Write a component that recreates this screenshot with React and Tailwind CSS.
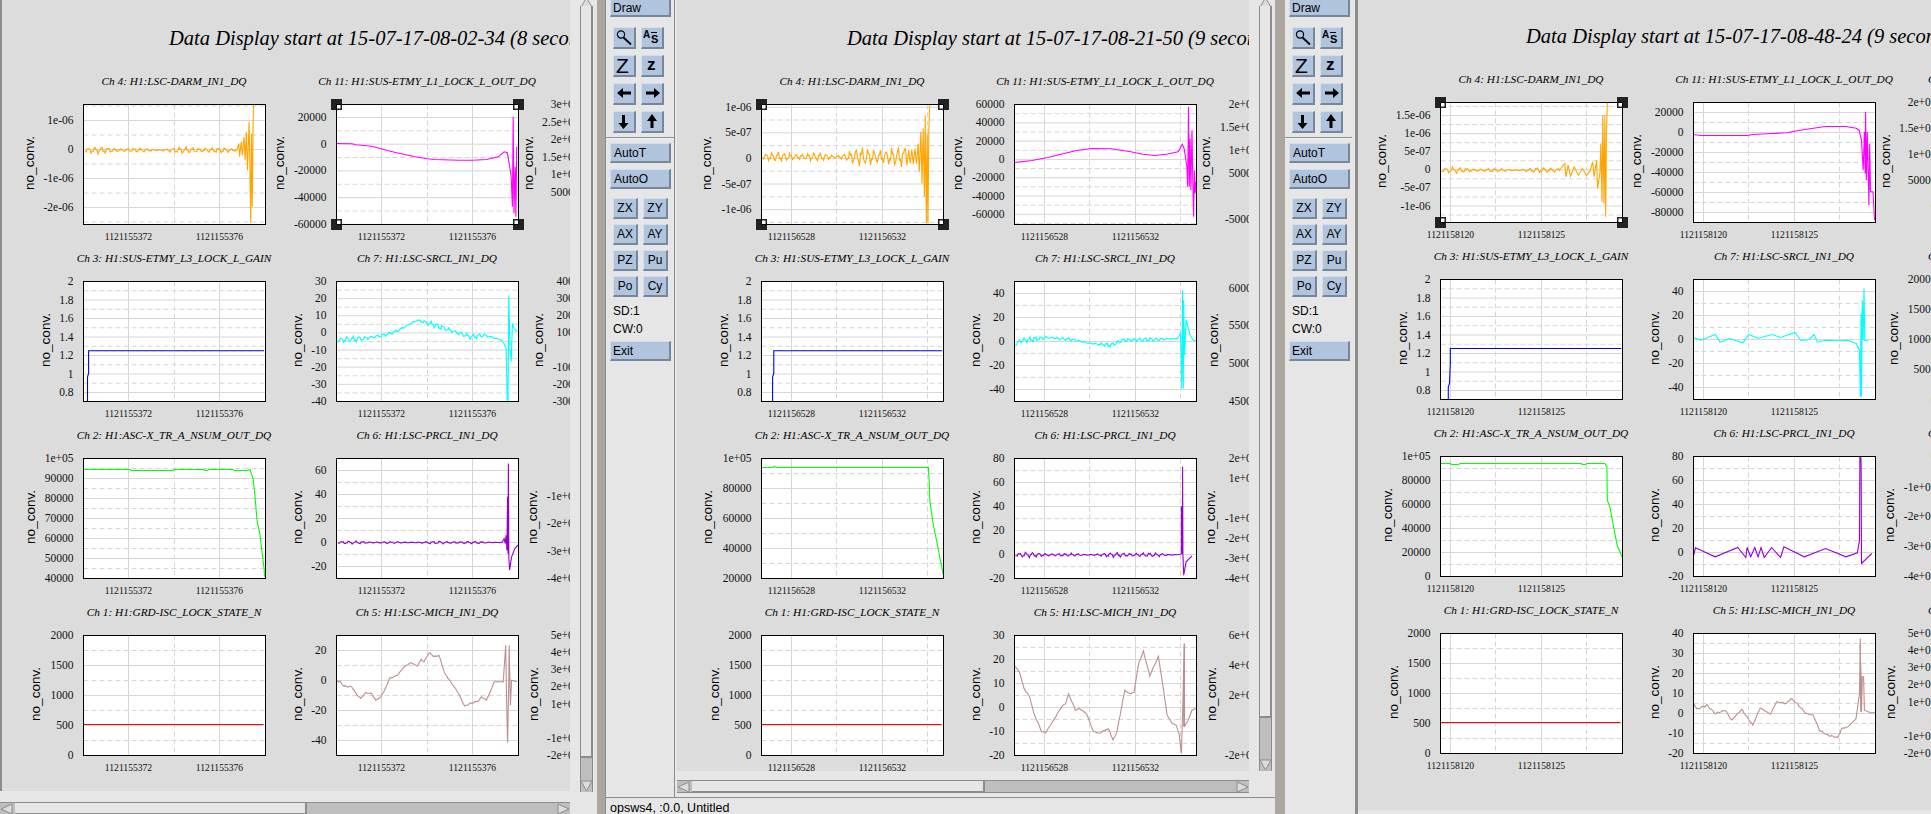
const SERIF = "font-['Liberation_Serif',serif]";

const PLOT_X = 70;
const PLOT_Y = 12;
const PLOT_W = 182;
const PLOT_H = 120;

// trace points were read off zoomed crops, so they get mapped back to plot pixels
const zoomTrace = (pts, left, top, fx) => {
  const out = [];
  for (let i = 0; i < pts.length; i += 2) out.push([(pts[i] - left) / fx, (pts[i + 1] - top) / 3]);
  return out;
};
const P1 = (col, row, pts) => zoomTrace(pts, [211, 851][col], [313, 844, 145, 676][row], 2.53);
const P2 = (col, row, pts) => zoomTrace(pts, [206, 846][col], [313, 844, 145, 676][row], 2.529);
const P3 = (col, row, pts) => zoomTrace(pts, [368, 987][col], [307, 838, 139, 670][row], 2.446);

const wavy = (base, amp, period) => {
  const out = [];
  for (let s = 0; s < base.length - 1; s++) {
    const [x0, y0] = base[s];
    const [x1, y1] = base[s + 1];
    for (let x = x0; x < x1; x += 1) {
      const a = typeof amp === 'function' ? amp(x) : amp;
      const y = y0 + ((y1 - y0) * (x - x0)) / (x1 - x0);
      const beat = 0.55 + 0.45 * Math.sin(x / 9.3) * Math.sin(x / 23 + 1);
      out.push([x, y + a * beat * (Math.sin((2 * Math.PI * x) / period) + 0.5 * Math.sin((2 * Math.PI * x) / (period * 0.37) + 1))]);
    }
  }
  return out;
};

const COLORS = [
  ['#ffa500', '#ff00ff'],
  ['#0000ff', '#00ffff'],
  ['#00ff00', '#9400d3'],
  ['#ff0000', '#bc8f8f'],
];

const TITLES = [
  ['Ch 4: H1:LSC-DARM_IN1_DQ', 'Ch 11: H1:SUS-ETMY_L1_LOCK_L_OUT_DQ'],
  ['Ch 3: H1:SUS-ETMY_L3_LOCK_L_GAIN', 'Ch 7: H1:LSC-SRCL_IN1_DQ'],
  ['Ch 2: H1:ASC-X_TR_A_NSUM_OUT_DQ', 'Ch 6: H1:LSC-PRCL_IN1_DQ'],
  ['Ch 1: H1:GRD-ISC_LOCK_STATE_N', 'Ch 5: H1:LSC-MICH_IN1_DQ'],
];

const GAIN = ['2', '1.8', '1.6', '1.4', '1.2', '1', '0.8'];
const STATE = ['2000', '1500', '1000', '500', '0'];

const PANELS = [
  {
    title: 'Data Display start at 15-07-17-08-02-34 (8 seconds)',
    titleLeft: 'ml-[167px]',
    canvas: 'pl-[11px]',
    xLabels: ['1121155372', '1121155376'],
    solid: [45, 136],
    dashed: [91],
    selected: [0, 1],
    rows: [
      [
        { y: [16, 29, ['1e-06', '0', '-1e-06', '-2e-06']], lx: 16.6, trace: [...wavy(P1(0, 0, [215, 450, 600, 450]), 2.6, 6.5), ...P1(0, 0, [600, 445, 604, 430, 606, 470, 610, 425, 613, 465, 617, 410, 620, 480, 623, 395, 626, 510, 630, 365, 632, 500, 634, 668, 636, 400, 638, 620, 640, 365, 641, 313])] },
        { y: [13, 26.7, ['20000', '0', '-20000', '-40000', '-60000']], lx: 13.5, trace: P1(1, 0, [851, 430, 890, 431, 900, 434, 940, 438, 1000, 457, 1050, 470, 1080, 476, 1100, 478, 1160, 480, 1195, 480, 1230, 478, 1260, 470, 1275, 455, 1283, 458, 1288, 490, 1293, 530, 1296, 620, 1298, 350, 1300, 640, 1303, 500, 1305, 650, 1307, 440]) },
        { y: [0, 17.6, ['3e+05', '2.5e+05', '2e+05', '1.5e+05', '1e+05', '50000', '0']], lx: 9.6 },
      ],
      [
        { y: [0, 18.5, GAIN], lx: 32.5, trace: P1(0, 1, [221, 1204, 221, 1130, 224, 1120, 224, 1052, 668, 1052]) },
        { y: [0, 17.14, ['30', '20', '10', '0', '-10', '-20', '-30', '-40']], lx: 31.3, trace: [...wavy(P1(1, 1, [851, 1020, 920, 1015, 970, 1005, 1000, 995, 1055, 960, 1100, 975, 1150, 995, 1190, 1010, 1225, 1005, 1270, 1020]), 2.4, 6), ...P1(1, 1, [1275, 1030, 1280, 1045, 1283, 1200, 1285, 1200, 1287, 885, 1290, 1050, 1293, 1085, 1296, 970, 1300, 985, 1308, 995])] },
        { y: [0, 17.14, ['4000', '3000', '2000', '1000', '0', '-1000', '-2000', '-3000']], lx: 19.5 },
      ],
      [
        { y: [0, 20, ['1e+05', '90000', '80000', '70000', '60000', '50000', '40000']], lx: 17, trace: P1(0, 2, [211, 178, 330, 178, 332, 181, 438, 181, 440, 178, 516, 178, 518, 181, 525, 181, 527, 178, 590, 178, 592, 181, 625, 181, 632, 178, 640, 205, 645, 260, 650, 330, 657, 370, 662, 420, 668, 475, 669, 500]) },
        { y: [12, 24, ['60', '40', '20', '0', '-20']], lx: 31.3, trace: [...wavy(P1(1, 2, [855, 397, 1270, 397]), 1.2, 7), ...P1(1, 2, [1275, 385, 1278, 400, 1280, 375, 1282, 420, 1284, 260, 1285, 430, 1286, 160, 1287, 440, 1289, 480, 1294, 440, 1302, 415, 1310, 405])] },
        { y: [11, 27.2, ['0', '-1e+05', '-2e+05', '-3e+05', '-4e+05']], lx: 13.6 },
      ],
      [
        { y: [0, 30, STATE], lx: 22.6, trace: [[0, 89], [180, 89]] },
        { y: [15, 30, ['20', '0', '-20', '-40']], lx: 31.3, trace: [...wavy(P1(1, 3, [851, 812, 860, 815, 870, 828, 890, 830, 900, 850, 912, 865, 925, 848, 940, 850, 950, 870, 962, 862, 975, 835, 985, 805, 1005, 795, 1022, 770, 1040, 757, 1055, 768, 1065, 748, 1072, 755, 1085, 728, 1100, 740, 1110, 735, 1125, 790, 1150, 832, 1160, 850, 1175, 888, 1190, 880, 1210, 872, 1218, 860, 1230, 870, 1240, 845, 1250, 815, 1275, 815]), 0.6, 5), ...P1(1, 3, [1279, 705, 1281, 860, 1284, 998, 1287, 805, 1288, 705, 1291, 885, 1294, 810, 1307, 815])] },
        { y: [0, 17.14, ['5e+05', '4e+05', '3e+05', '2e+05', '1e+05', '0', '-1e+05', '-2e+05']], lx: 14.8 },
      ],
    ],
  },
  {
    title: 'Data Display start at 15-07-17-08-21-50 (9 seconds)',
    titleLeft: 'ml-[170px]',
    canvas: 'pl-[14px]',
    xLabels: ['1121156528', '1121156532'],
    solid: [30, 121],
    dashed: [75, 166],
    selected: [0, 0],
    rows: [
      [
        { y: [2.7, 25.6, ['1e-06', '5e-07', '0', '-5e-07', '-1e-06']], lx: 15.9, trace: [...wavy(P2(0, 0, [206, 470, 570, 470]), (x) => 3 + x * 0.05, 6), ...P2(0, 0, [570, 445, 574, 495, 578, 450, 582, 490, 586, 448, 590, 492, 594, 445, 598, 490, 602, 430, 605, 515, 609, 395, 612, 550, 615, 385, 618, 590, 620, 345, 623, 670, 625, 400, 627, 670, 629, 400, 631, 313])] },
        { y: [0, 18.3, ['60000', '40000', '20000', '0', '-20000', '-40000', '-60000']], lx: 13.6, trace: P2(1, 0, [846, 487, 890, 481, 930, 472, 1000, 452, 1040, 445, 1090, 446, 1140, 455, 1170, 462, 1200, 466, 1230, 462, 1260, 455, 1270, 432, 1275, 445, 1282, 500, 1284, 560, 1286, 320, 1288, 560, 1290, 415, 1292, 570, 1295, 390, 1297, 540, 1299, 650, 1301, 510, 1303, 580, 1305, 545]) },
        { y: [0, 22.9, ['2e+05', '1.5e+05', '1e+05', '50000', '0', '-50000']], lx: 8.9 },
      ],
      [
        { y: [0, 18.5, GAIN], lx: 32.5, trace: P2(0, 1, [234, 1204, 234, 1130, 237, 1120, 237, 1052, 663, 1052]) },
        { y: [12, 24, ['40', '20', '0', '-20', '-40']], lx: 31.4, trace: [...wavy(P2(1, 1, [846, 1035, 860, 1022, 930, 1012, 990, 1018, 1040, 1030, 1090, 1035, 1120, 1020, 1200, 1018, 1260, 1015]), 2, 5.5), ...P2(1, 1, [1266, 1000, 1269, 1165, 1271, 870, 1273, 1165, 1274, 900, 1276, 1065, 1280, 960, 1290, 1005, 1298, 1020, 1305, 1020])] },
        { y: [6.7, 37.6, ['60000', '55000', '50000', '45000']], lx: 16.8 },
      ],
      [
        { y: [0, 30, ['1e+05', '80000', '60000', '40000', '20000']], lx: 16.7, trace: P2(0, 2, [206, 172, 235, 172, 238, 169, 245, 172, 628, 172, 630, 215, 632, 275, 640, 340, 650, 400, 660, 460, 666, 495]) },
        { y: [0, 24, ['80', '60', '40', '20', '0', '-20']], lx: 31.4, trace: [...wavy(P2(1, 2, [848, 434, 1260, 434]), 2, 6.5), ...P2(1, 2, [1266, 432, 1268, 430, 1268, 290, 1270, 290, 1270, 430, 1271, 430, 1271, 170, 1272, 430, 1274, 495, 1280, 455, 1295, 437])] },
        { y: [0, 20, ['2e+05', '1e+05', '0', '-1e+05', '-2e+05', '-3e+05', '-4e+05']], lx: 13.6 },
      ],
      [
        { y: [0, 30, STATE], lx: 23.4, trace: [[0, 89], [180, 89]] },
        { y: [0, 24, ['30', '20', '10', '0', '-10', '-20']], lx: 31.4, trace: [...wavy(P2(1, 3, [848, 768, 860, 790, 870, 835, 885, 862, 895, 910, 915, 965, 925, 967, 945, 930, 965, 890, 975, 880, 983, 852, 1000, 900, 1010, 895, 1028, 910, 1045, 963, 1060, 970, 1078, 958, 1085, 958, 1095, 990, 1105, 965, 1125, 840, 1135, 850, 1148, 848, 1160, 760, 1172, 724, 1180, 760, 1188, 797, 1198, 770, 1210, 740, 1218, 800, 1232, 915, 1245, 940, 1255, 945, 1263, 975]), 0.6, 5), ...P2(1, 3, [1268, 1030, 1272, 880, 1275, 700, 1274, 950, 1276, 700, 1276, 950, 1285, 930, 1295, 900, 1305, 895])] },
        { y: [0, 30, ['6e+05', '4e+05', '2e+05', '0', '-2e+05']], lx: 14.8 },
      ],
    ],
  },
  {
    title: 'Data Display start at 15-07-17-08-48-24 (9 seconds)',
    titleLeft: 'ml-[168px]',
    canvas: 'pl-[12px]',
    top: true,
    xLabels: ['1121158120', '1121158125'],
    solid: [10, 101],
    dashed: [55, 146],
    selected: [0, 0],
    rows: [
      [
        { y: [13, 18.1, ['1.5e-06', '1e-06', '5e-07', '0', '-5e-07', '-1e-06']], lx: 11, trace: [...wavy(P3(0, 0, [368, 510, 660, 510]), 2.2, 7), ...P3(0, 0, [662, 505, 672, 490, 675, 530, 680, 495, 686, 528, 695, 500, 705, 525, 715, 505, 725, 525, 735, 510, 740, 485, 744, 530, 750, 480, 752, 565, 758, 520, 760, 430, 763, 605, 765, 345, 768, 610, 770, 345, 772, 650, 774, 400, 776, 307])] },
        { y: [10, 20, ['20000', '0', '-20000', '-40000', '-60000', '-80000']], lx: 13.3, trace: P3(1, 0, [987, 403, 1005, 406, 1120, 406, 1130, 403, 1180, 400, 1215, 398, 1240, 392, 1280, 384, 1310, 379, 1360, 379, 1385, 384, 1392, 390, 1398, 420, 1402, 510, 1405, 395, 1407, 520, 1408, 335, 1410, 540, 1412, 395, 1416, 615, 1418, 430, 1420, 575, 1426, 575, 1430, 660]) },
        { y: [0, 26, ['2e+05', '1.5e+05', '1e+05', '50000', '0']], lx: 9.7 },
      ],
      [
        { y: [0, 18.5, GAIN], lx: 32.4, trace: P3(0, 1, [387, 1198, 387, 1160, 390, 1150, 392, 1090, 392, 1045, 810, 1045]) },
        { y: [12, 24, ['40', '20', '0', '-20', '-40']], lx: 31.7, trace: P3(1, 1, [987, 1012, 1005, 1020, 1040, 1003, 1052, 1026, 1075, 1015, 1108, 1028, 1122, 1003, 1145, 1014, 1180, 1003, 1200, 1012, 1235, 997, 1250, 1021, 1270, 1018, 1282, 1003, 1290, 1026, 1310, 1020, 1345, 1022, 1365, 1020, 1385, 1030, 1393, 1050, 1395, 1190, 1397, 940, 1398, 1190, 1400, 900, 1402, 1020, 1404, 865, 1406, 1020, 1414, 1022]) },
        { y: [0, 30, ['20000', '15000', '10000', '5000', '0']], lx: 17.9 },
      ],
      [
        { y: [0, 24, ['1e+05', '80000', '60000', '40000', '20000', '0']], lx: 17.3, trace: P3(0, 2, [368, 160, 392, 160, 395, 163, 413, 163, 415, 160, 712, 160, 715, 163, 723, 163, 725, 160, 770, 160, 775, 170, 776, 270, 782, 290, 790, 340, 800, 405, 812, 440]) },
        { y: [0, 24, ['80', '60', '40', '20', '0', '-20']], lx: 31.7, trace: P3(1, 2, [987, 437, 992, 413, 1040, 440, 1095, 412, 1115, 442, 1118, 412, 1127, 440, 1137, 412, 1145, 440, 1152, 412, 1160, 442, 1178, 412, 1200, 442, 1208, 410, 1258, 440, 1310, 415, 1360, 440, 1388, 428, 1393, 390, 1394, 139, 1396, 139, 1397, 160, 1398, 460, 1423, 430]) },
        { y: [1, 29.7, ['0', '-1e+05', '-2e+05', '-3e+05', '-4e+05']], lx: 13.8 },
      ],
      [
        { y: [0, 30, STATE], lx: 23.4, trace: [[0, 89], [180, 89]] },
        { y: [0, 20, ['40', '30', '20', '10', '0', '-10', '-20']], lx: 31.7, trace: [...wavy(P3(1, 3, [987, 878, 995, 897, 1020, 885, 1040, 910, 1065, 900, 1080, 930, 1105, 898, 1132, 945, 1150, 893, 1175, 912, 1190, 875, 1215, 880, 1225, 865, 1240, 880, 1262, 910, 1280, 915, 1295, 960, 1315, 975, 1340, 982, 1350, 955, 1365, 950, 1385, 925]), 0.7, 5), ...P3(1, 3, [1393, 850, 1395, 685, 1396, 905, 1394, 700, 1397, 800, 1398, 905, 1400, 800, 1403, 800, 1405, 900, 1420, 908, 1432, 908])] },
        { y: [0, 17.14, ['5e+05', '4e+05', '3e+05', '2e+05', '1e+05', '0', '-1e+05', '-2e+05']], lx: 14.6 },
      ],
    ],
  },
];

function Chart({ chart, color, panel, selected, offscreen }) {
  const [first, step, labels] = chart.y;
  const offsets = labels.map((_, i) => first + i * step);
  const mids = [first - step / 2, ...offsets.map((o) => o + step / 2)].filter((o) => o > 0 && o < PLOT_H);
  const left = PLOT_X + 0.5;
  const top = PLOT_Y + 0.5;
  const corners = [[0, 0], [PLOT_W, 0], [0, PLOT_H], [PLOT_W, PLOT_H]];

  return (
    <svg width="253" height="155" className="block overflow-visible">
      <text
        x={chart.lx}
        y={PLOT_Y + 59}
        transform={`rotate(-90 ${chart.lx} ${PLOT_Y + 59})`}
        textAnchor="middle"
        dominantBaseline="central"
        className="fill-black font-['Liberation_Sans',sans-serif] text-[13.5px]"
      >
        no_conv.
      </text>
      {labels.map((l, i) => (
        <text key={l} x={PLOT_X - 9.5} y={PLOT_Y + offsets[i] + 4} textAnchor="end" className={`fill-[#111] text-[11.5px] ${SERIF}`}>
          {l}
        </text>
      ))}
      {!offscreen && (
        <>
          <rect x={left} y={top} width={PLOT_W} height={PLOT_H} fill="#ffffff" />
          {offsets.map((o) => (
            <line key={o} x1={left} x2={left + PLOT_W} y1={top + o} y2={top + o} stroke="#d6d6d6" />
          ))}
          {mids.map((o) => (
            <line key={o} x1={left} x2={left + PLOT_W} y1={top + o} y2={top + o} stroke="#d6d6d6" strokeDasharray="5 3" />
          ))}
          {panel.solid.map((x) => (
            <line key={x} x1={left + x} x2={left + x} y1={top} y2={top + PLOT_H} stroke="#d6d6d6" />
          ))}
          {panel.dashed.map((x) => (
            <line key={x} x1={left + x} x2={left + x} y1={top} y2={top + PLOT_H} stroke="#d6d6d6" strokeDasharray="5 3" />
          ))}
          <polyline
            points={chart.trace.map(([x, y]) => `${(left + x).toFixed(1)},${(top + y).toFixed(1)}`).join(' ')}
            fill="none"
            stroke={color}
            strokeWidth="1.1"
          />
          <rect x={left} y={top} width={PLOT_W} height={PLOT_H} fill="none" stroke="#000000" />
          {panel.xLabels.map((l, i) => (
            <text key={l} x={left + panel.solid[i]} y={PLOT_Y + PLOT_H + 15.5} textAnchor="middle" className={`fill-[#111] text-[9.6px] ${SERIF}`}>
              {l}
            </text>
          ))}
          {selected &&
            corners.map(([cx, cy]) => (
              <g key={`${cx}-${cy}`}>
                <rect x={left + cx - 5.5} y={top + cy - 5.5} width="11" height="11" fill="#222222" />
                <rect x={left + cx + (cx ? -4 : 0)} y={top + cy + (cy ? -4 : 0)} width="4" height="4" fill="#ffffff" />
                <path d={`M${left + cx + (cx ? -5 : 0)} ${top + cy}h5M${left + cx} ${top + cy + (cy ? -5 : 0)}v5`} stroke="#000000" />
              </g>
            ))}
        </>
      )}
    </svg>
  );
}

function Canvas({ panel, className }) {
  return (
    <div className={`overflow-hidden bg-[#dcdcdc] ${className}`}>
      <div className={`flex h-[70px] items-start pt-[25px] ${panel.top ? '-mt-[2px]' : ''}`}>
        <span className={`whitespace-nowrap text-[20.5px] italic leading-[26px] text-black ${SERIF} ${panel.titleLeft}`}>{panel.title}</span>
      </div>
      <div className={`grid w-[800px] grid-cols-[253px_253px_253px] grid-rows-[177px_177px_177px_177px] ${panel.canvas}`}>
        {panel.rows.map((row, r) =>
          row.map((chart, c) => (
            <div key={c}>
              {c < 2 ? (
                <div className={`ml-[70px] flex h-[22px] w-[182px] items-center justify-center whitespace-nowrap text-[11.3px] italic text-black ${SERIF}`}>
                  {TITLES[r][c]}
                </div>
              ) : (
                <div className={`ml-[52px] flex h-[22px] items-center text-[11.3px] italic text-black ${SERIF}`}>Ch</div>
              )}
              <Chart
                chart={chart}
                color={COLORS[r][c]}
                panel={panel}
                offscreen={c === 2}
                selected={panel.selected[0] === r && panel.selected[1] === c}
              />
            </div>
          )),
        )}
      </div>
    </div>
  );
}

function ArrowV({ up }) {
  return (
    <svg width="13" height="12" className="block">
      <path d={up ? 'M6.5 1L12 10H1Z' : 'M6.5 11L12 1H1Z'} fill="#dcdcdc" stroke="#8c8c8c" />
    </svg>
  );
}

function ArrowH({ right }) {
  return (
    <svg width="13" height="12" className="block shrink-0">
      <path d={right ? 'M12 6L1 1V11Z' : 'M1 6L12 1V11Z'} fill="#dcdcdc" stroke="#8c8c8c" />
    </svg>
  );
}

function ScrollV({ thumb, className }) {
  return (
    <div className={`flex w-[13px] flex-col border-x border-x-[#8c8c8c] bg-[#bebebe] ${className}`}>
      <div className="-mt-[3px] -mx-px h-[9px] shrink-0 overflow-hidden bg-[#e6e6e6]">
        <ArrowV up />
      </div>
      <div className={`border-b-2 border-r border-[#8c8c8c] bg-[#e6e6e6] ${thumb}`} />
      <div className="flex-1" />
      <div className="-mx-px h-[12px] shrink-0">
        <ArrowV />
      </div>
    </div>
  );
}

function ScrollH({ thumb, className }) {
  return (
    <div className={`flex h-[13px] items-center border-y border-y-[#8c8c8c] bg-[#bebebe] ${className}`}>
      <ArrowH />
      <div className={`ml-[2px] h-full border-b border-r-2 border-[#8c8c8c] bg-[#e6e6e6] ${thumb}`} />
      <div className="flex-1" />
      <ArrowH right />
    </div>
  );
}

const BTN = "flex items-center border-t border-l border-t-[#d3deee] border-l-[#d3deee] border-b-2 border-r-2 border-b-[#76879c] border-r-[#76879c] bg-[#b0c4de] text-[12px] text-black font-['Liberation_Sans',sans-serif]";

function IconBtn({ children }) {
  return (
    <div className={`${BTN} h-[22px] justify-center`}>
      <svg width="20" height="19" viewBox="0 0 20 19" className="block">
        {children}
      </svg>
    </div>
  );
}

function Toolbar({ className }) {
  return (
    <div className={`flex flex-col bg-[#e6e6e6] ${className}`}>
      <div className={`${BTN} ml-[4px] h-[17px] w-[61px] border-t-0 pl-[2px]`}>Draw</div>
      <div className="ml-[7px] mt-[10px] grid grid-cols-[23px_23px] gap-x-[5px] gap-y-[6px]">
        <IconBtn>
          <circle cx="7" cy="6.5" r="3.6" fill="none" stroke="#000000" strokeWidth="1.2" />
          <path d="M9.5 9.5L17 16.5" stroke="#000000" strokeWidth="1.8" />
        </IconBtn>
        <IconBtn>
          <text x="1" y="10" className="fill-black font-['Liberation_Sans',sans-serif] text-[10px] font-bold">A</text>
          <text x="9" y="15" className="fill-black font-['Liberation_Sans',sans-serif] text-[11px] font-bold">S</text>
          <path d="M9 4.5h6" stroke="#000000" />
        </IconBtn>
        <IconBtn>
          <text x="2" y="16.5" className="fill-black font-['Liberation_Sans',sans-serif] text-[21px]">Z</text>
        </IconBtn>
        <IconBtn>
          <text x="5" y="14" className="fill-black font-['Liberation_Sans',sans-serif] text-[17px] font-bold">z</text>
        </IconBtn>
        <IconBtn>
          <path d="M3 9L9 4V7.5H17V10.5H9V14Z" fill="#000000" />
        </IconBtn>
        <IconBtn>
          <path d="M18 9L12 4V7.5H4V10.5H12V14Z" fill="#000000" />
        </IconBtn>
        <IconBtn>
          <path d="M9.5 17L4.5 11H8V3H11V11H14.5Z" fill="#000000" />
        </IconBtn>
        <IconBtn>
          <path d="M10 2L5 9H8.5V16H11.5V9H15Z" fill="#000000" />
        </IconBtn>
      </div>
      <div className="mt-[4px] h-[2px] border-t border-t-[#8f8f8f] bg-[#f2f2f2]" />
      <div className={`${BTN} ml-[4px] mt-[4px] h-[20px] w-[61px] pl-[3px]`}>AutoT</div>
      <div className={`${BTN} ml-[4px] mt-[6px] h-[20px] w-[61px] pl-[3px]`}>AutoO</div>
      <div className="ml-[7px] mt-[9px] grid grid-cols-[25px_25px] gap-x-[5px] gap-y-[5px]">
        {['ZX', 'ZY', 'AX', 'AY', 'PZ', 'Pu', 'Po', 'Cy'].map((b) => (
          <div key={b} className={`${BTN} h-[21px] justify-center`}>
            {b}
          </div>
        ))}
      </div>
      <div className="ml-[7px] mt-[5px] text-[12px] leading-[18px] text-black font-['Liberation_Sans',sans-serif]">
        <div>SD:1</div>
        <div>CW:0</div>
      </div>
      <div className={`${BTN} ml-[4px] mt-[3px] h-[20px] w-[61px] pl-[2px]`}>Exit</div>
    </div>
  );
}

export default function App() {
  return (
    <div className="flex h-[814px] w-[1931px] overflow-hidden bg-[#e6e6e6]">
      {/* left window */}
      <div className="flex w-[597px] shrink-0 flex-col">
        <div className="flex">
          <Canvas panel={PANELS[0]} className="h-[791px] w-[570px] border-l-2 border-l-[#8c8c8c]" />
          <ScrollV thumb="h-[752px]" className="ml-[10px] h-[792px]" />
        </div>
        <ScrollH thumb="w-[292px]" className="mt-[10px] w-[570px]" />
      </div>
      <div className="w-[8px] shrink-0 bg-[#aba79f]" />

      {/* middle window */}
      <div className="flex w-[670px] shrink-0 flex-col">
        <div className="flex h-[797px]">
          <Toolbar className="w-[70px] shrink-0 border-x border-x-[#8c8c8c]" />
          <div className="ml-[2px] flex flex-col">
            <div className="flex">
              <Canvas panel={PANELS[1]} className="h-[771px] w-[572px] border-t-0" />
              <ScrollV thumb="h-[712px]" className="ml-[10px] h-[771px]" />
            </div>
            <ScrollH thumb="w-[293px]" className="mt-[9px] w-[572px]" />
          </div>
        </div>
        <div className="h-[17px] flex-1 border-l border-t border-[#8c8c8c] pl-[4px] text-[12.5px] leading-[20px] text-black font-['Liberation_Sans',sans-serif]">
          opsws4, :0.0, Untitled
        </div>
      </div>
      <div className="w-[10px] shrink-0 bg-[#aba79f]" />

      {/* right window */}
      <Toolbar className="h-[814px] w-[67px] shrink-0" />
      <div className="w-[3px] shrink-0 bg-[#e6e6e6]" />
      <div className="w-[3px] shrink-0 bg-[#8c8c8c]" />
      <Canvas panel={PANELS[2]} className="h-[810px] w-[573px] shrink-0" />
    </div>
  );
}
